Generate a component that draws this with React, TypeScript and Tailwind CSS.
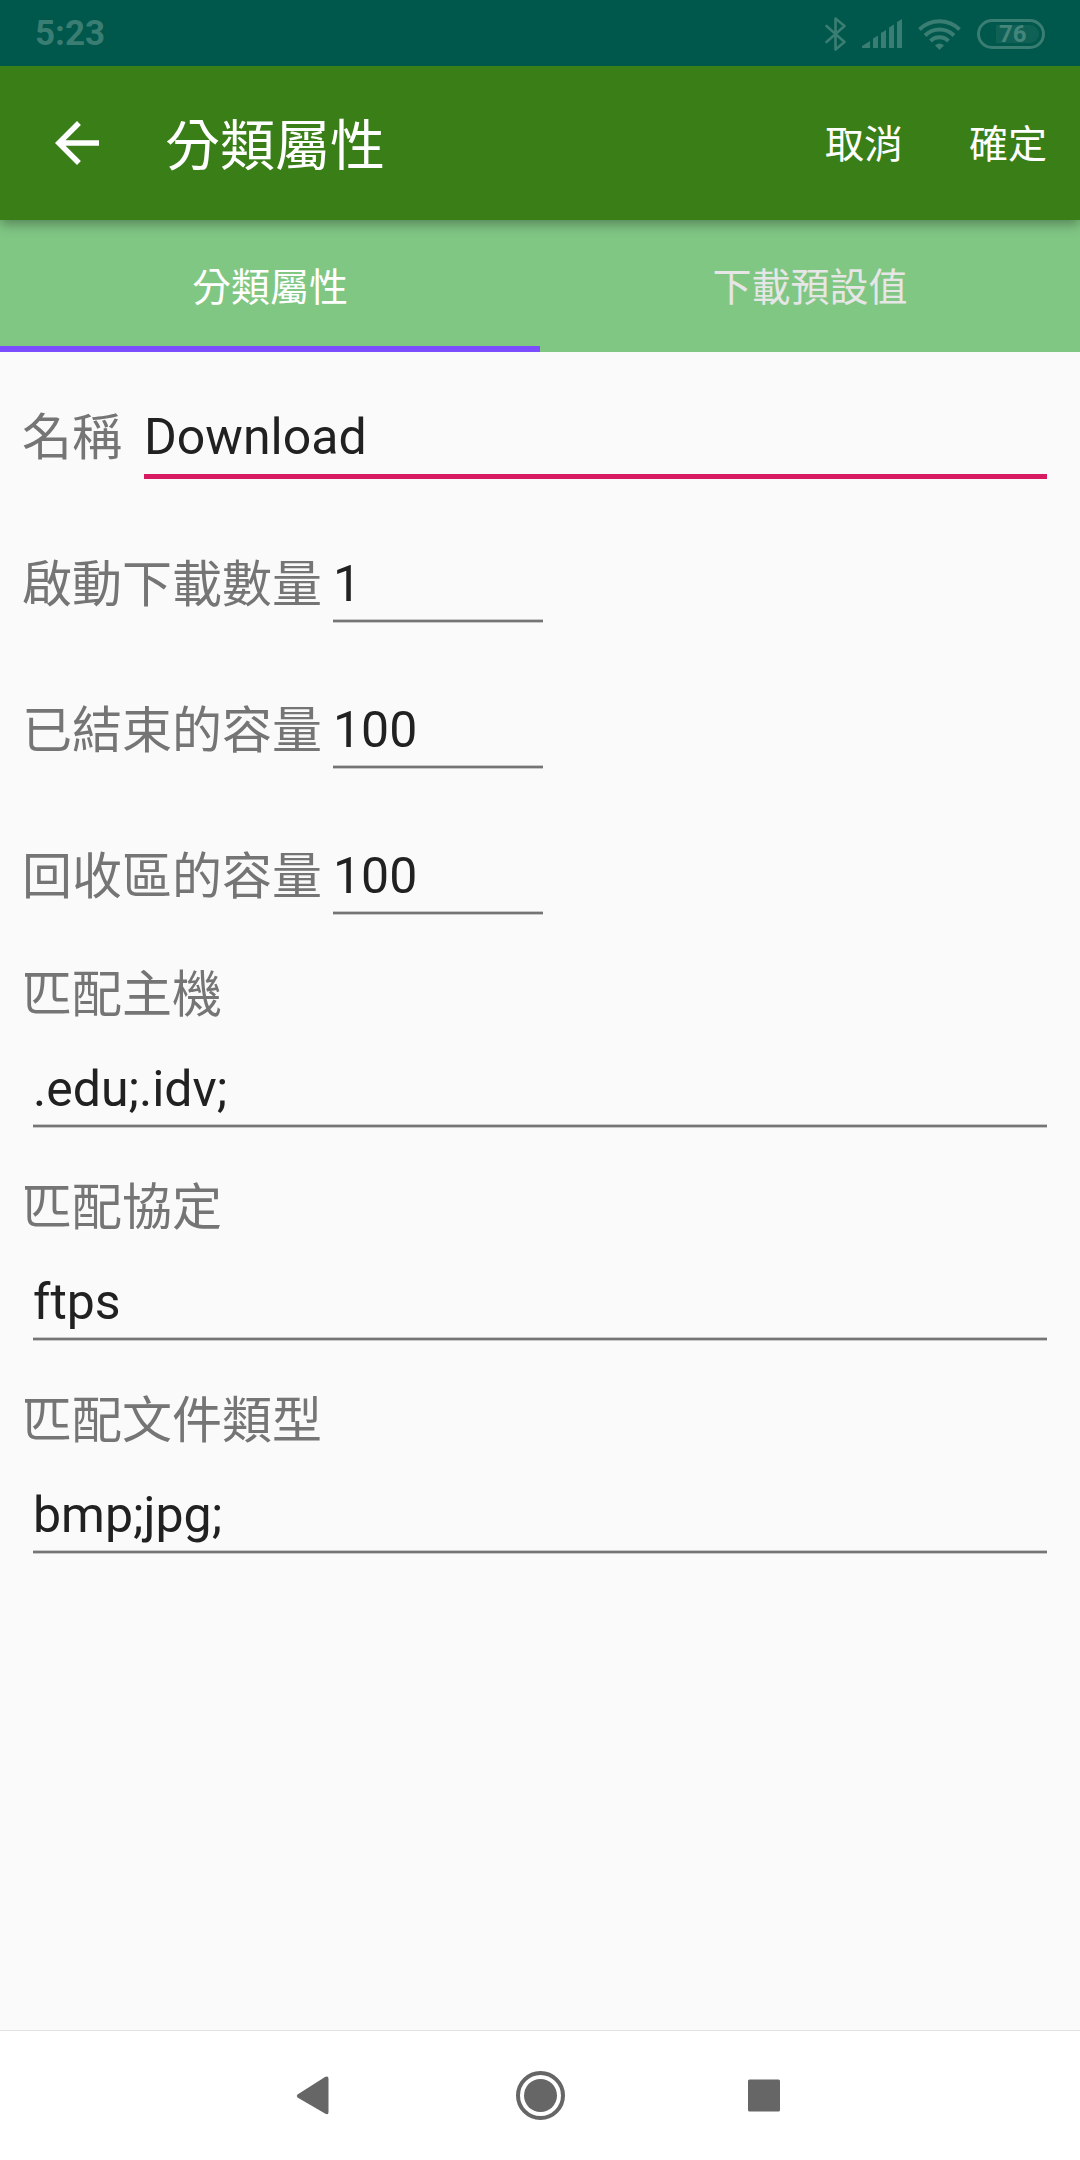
import type { ReactNode } from "react";

const numberFields = [
  { id: "active", label: "啟動下載數量", value: "1" },
  { id: "finished", label: "已結束的容量", value: "100" },
  { id: "recycled", label: "回收區的容量", value: "100" },
];

const matchFields = [
  { id: "hosts", label: "匹配主機", value: ".edu;.idv;" },
  { id: "schemes", label: "匹配協定", value: "ftps" },
  { id: "types", label: "匹配文件類型", value: "bmp;jpg;" },
];

function StatusBar() {
  return (
    <div className="relative z-20 flex h-[66px] items-center justify-between bg-[#00574b] pt-0.5 pl-[35px] pr-[35px] text-[#3a7d73]">
      <span className="text-[35px] leading-10 font-bold">5:23</span>
      <div className="flex items-center">
        <svg width="22" height="34" viewBox="0 0 22 34" fill="none" stroke="currentColor" strokeWidth="2.6" strokeLinejoin="round" strokeLinecap="round" aria-label="Bluetooth">
          <path d="M1.5 9 L19.5 25 L10.5 32.5 V1.5 L19.5 9 L1.5 25" />
        </svg>
        <svg className="ml-[15px]" width="41" height="30" viewBox="0 0 41 30" fill="currentColor" aria-label="Signal">
          <path d="M0 29 V27 L8 22 V29 Z M11 29 V19.500 L16 16.500 V29 Z M19 29 V14 L24 11 V29 Z M27 29 V8.500 L32 5.500 V29 Z M35 29 V3 L40 0 V29 Z" />
        </svg>
        <svg className="ml-[15px]" width="43" height="31" viewBox="0 0 43 31" fill="none" stroke="currentColor" strokeWidth="4" aria-label="Wi-Fi">
          <path d="M1.500 10.500 A28.500 28.500 0 0 1 41.500 10.500 M7 16.500 A20.500 20.500 0 0 1 36 16.500 M12.500 22 A12.700 12.700 0 0 1 30.500 22" />
          <path d="M17 26.500 A6.300 6.300 0 0 1 26 26.500 L21.500 31 Z" fill="currentColor" stroke="none" />
        </svg>
        <div className="ml-4 flex h-[30px] w-[68px] items-center justify-end rounded-full border-[3px] border-[#3a7d73] p-[3px]">
          <div className="flex h-[18px] w-[43px] items-center rounded-l-sm rounded-r-full bg-[#106155] pl-[3px] text-[24px] leading-6 font-bold text-[#45857b]">76</div>
        </div>
      </div>
    </div>
  );
}

function AppBar() {
  return (
    <header className="relative z-10 flex h-[154px] items-center bg-[#3a7e18] pl-11 text-white shadow-[0_4px_12px_rgba(0,0,0,0.35)]">
      <button type="button" aria-label="返回" className="size-[66px]">
        <svg viewBox="0 0 24 24" fill="currentColor" className="size-full">
          <path d="M20 11H7.830l5.590-5.590L12 4l-8 8 8 8 1.410-1.410L7.830 13H20v-2z" />
        </svg>
      </button>
      <h1 className="ml-[55px] flex-1 pt-1.5 text-[55px] leading-[80px] font-normal">分類屬性</h1>
      <button type="button" className="px-[33px] pt-1 text-[39px] leading-[56px]">取消</button>
      <button type="button" className="px-[33px] pt-1 text-[39px] leading-[56px]">確定</button>
    </header>
  );
}

function Tab({ active, children }: { active?: boolean; children: ReactNode }) {
  return (
    <button
      type="button"
      role="tab"
      aria-selected={!!active}
      className={
        active
          ? "flex-1 border-b-[6px] border-[#7c4dff] pt-2.5 text-white"
          : "flex-1 border-b-[6px] border-transparent pt-2.5 text-[#e6e6e6]"
      }
    >
      {children}
    </button>
  );
}

function Underline() {
  return <div className="h-1 border-y border-[#c8c8c8] bg-[#757575]" />;
}

const inputClass = "block h-[70px] w-full bg-transparent text-[50px] text-[#212121] outline-none";

function NavBar() {
  return (
    <nav className="flex h-[130px] items-center justify-center gap-[158px] border-t border-[#e2e2e2] bg-white text-[#666666]">
      <button type="button" aria-label="Back" className="size-[66px]">
        <svg viewBox="0 0 66 66" fill="currentColor" className="size-full">
          <path d="M14.500 31.500 L42 14 Q45.500 12.500 45.500 16 V49 Q45.500 52.500 42 50.500 L14.500 34.500 Q13 33 14.500 31.500 Z" />
        </svg>
      </button>
      <button type="button" aria-label="Home" className="size-[66px]">
        <svg viewBox="0 0 66 66" className="size-full">
          <circle cx="33.5" cy="32.5" r="22.500" fill="none" stroke="currentColor" strokeWidth="4" />
          <circle cx="33.5" cy="32.5" r="16.500" fill="currentColor" />
        </svg>
      </button>
      <button type="button" aria-label="Recent" className="size-[66px]">
        <svg viewBox="0 0 66 66" fill="currentColor" className="size-full">
          <rect x="17" y="16.5" width="32" height="32" rx="1.500" />
        </svg>
      </button>
    </nav>
  );
}

export default function App() {
  return (
    <div className="flex min-h-screen flex-col bg-[#fafafa] font-['Roboto','Noto_Sans_CJK_TC',sans-serif]">
      <StatusBar />
      <AppBar />
      <div role="tablist" className="flex h-[132px] bg-[#81c784] text-[39px] leading-[56px]">
        <Tab active>分類屬性</Tab>
        <Tab>下載預設值</Tab>
      </div>

      <form className="flex-1 pt-[50px] pr-[33px] text-[50px] leading-[72px] text-[#757575]">
        <div className="flex h-[77px] items-start pl-[22px]">
          <label htmlFor="name" className="w-[122px]">名稱</label>
          <div className="flex-1">
            <input id="name" defaultValue="Download" className={inputClass} />
            <div className="mt-[2px] h-[5px] bg-[#d81b60]" />
          </div>
        </div>
        {numberFields.map((f) => (
          <div key={f.id} className="mt-[70px] flex h-[76px] items-start pl-[22px]">
            <label htmlFor={f.id} className="w-[311px]">{f.label}</label>
            <div className="w-[210px]">
              <input id={f.id} inputMode="numeric" defaultValue={f.value} className={inputClass} />
              <Underline />
            </div>
          </div>
        ))}
        <div className="pt-[42px]">
          {matchFields.map((f) => (
            <div key={f.id} className="h-[213px]">
              <label htmlFor={f.id} className="block pl-[22px]">{f.label}</label>
              <div className="pl-[33px] pt-[23px]">
                <input id={f.id} defaultValue={f.value} className={inputClass} />
                <Underline />
              </div>
            </div>
          ))}
        </div>
      </form>

      <NavBar />
    </div>
  );
}
